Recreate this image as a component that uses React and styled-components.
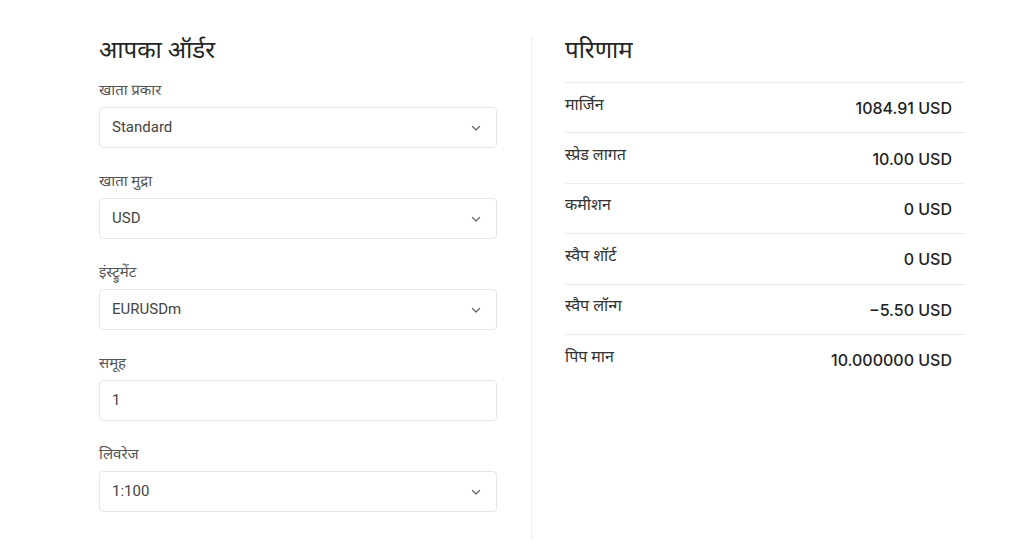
import React from "react";
import styled, { createGlobalStyle } from "styled-components";

const Global = createGlobalStyle`
  html, body { margin: 0; padding: 0; background: #ffffff; }
  body { font-family: Roboto, "Noto Sans Devanagari", "Noto Sans", "Lohit Devanagari", sans-serif; color: #222; }
  * { box-sizing: border-box; }
`;

const Page = styled.div`
  display: flex;
  align-items: stretch;
  padding: 36px 0 14px 99px;
  width: 1024px;
  height: 554px;
`;

const LeftCol = styled.section`
  width: 398px;
  display: flex;
  flex-direction: column;
`;

const Divider = styled.div`
  width: 1px;
  background: #efefef;
  margin: 1px 33px 0 34px;
`;

const RightCol = styled.section`
  width: 400px;
  display: flex;
  flex-direction: column;
`;

const Title = styled.h2`
  margin: 0;
  font-size: 24px;
  line-height: 28px;
  font-weight: 400;
  color: #252525;
`;

const Field = styled.div`
  display: flex;
  flex-direction: column;
  margin-top: ${(p) => (p.first ? "16px" : "23px")};
`;

const Label = styled.label`
  font-size: 15px;
  line-height: 20px;
  color: #555;
  margin-bottom: 7px;
`;

const Box = styled.div`
  height: 41px;
  border: 1px solid #e6e6e6;
  border-radius: 4px;
  display: flex;
  align-items: center;
  justify-content: space-between;
  padding: 0 12px 2px 12px;
  font-size: 15px;
  color: #444;
  background: #fff;
`;

const Chevron = styled.svg`
  width: 12px;
  height: 12px;
  margin-right: 2px;
  margin-top: 2px;
  color: #666;
`;

const Table = styled.div`
  margin-top: 18px;
  display: flex;
  flex-direction: column;
`;

const Row = styled.div`
  height: 50.4px;
  border-top: 1px solid #ececec;
  display: flex;
  align-items: center;
  justify-content: space-between;
  padding: 0 13px 0 0;
`;

const RowLabel = styled.span`
  font-size: 16px;
  color: #333;
  margin-top: -4px;
`;

const RowValue = styled.span`
  font-family: Inter, Roboto, sans-serif;
  font-size: 16px;
  font-weight: 500;
  color: #222;
  margin-top: 1px;
`;

const ChevronIcon = () => (
  <Chevron viewBox="0 0 12 12" fill="none">
    <path d="M2.5 4.5 L6 8 L9.5 4.5" stroke="currentColor" strokeWidth="1.3" strokeLinecap="round" strokeLinejoin="round" />
  </Chevron>
);

const fields = [
  { label: "खाता प्रकार", value: "Standard", select: true },
  { label: "खाता मुद्रा", value: "USD", select: true },
  { label: "इंस्ट्रुमेंट", value: "EURUSDm", select: true },
  { label: "समूह", value: "1", select: false },
  { label: "लिवरेज", value: "1:100", select: true },
];

const results = [
  { label: "मार्जिन", value: "1084.91 USD" },
  { label: "स्प्रेड लागत", value: "10.00 USD" },
  { label: "कमीशन", value: "0 USD" },
  { label: "स्वैप शॉर्ट", value: "0 USD" },
  { label: "स्वैप लॉन्ग", value: "−5.50 USD" },
  { label: "पिप मान", value: "10.000000 USD" },
];

export default function App() {
  return (
    <>
      <Global />
      <Page>
        <LeftCol>
          <Title>आपका ऑर्डर</Title>
          {fields.map((f, i) => (
            <Field key={f.label} first={i === 0}>
              <Label>{f.label}</Label>
              <Box>
                <span>{f.value}</span>
                {f.select && <ChevronIcon />}
              </Box>
            </Field>
          ))}
        </LeftCol>
        <Divider />
        <RightCol>
          <Title>परिणाम</Title>
          <Table>
            {results.map((r) => (
              <Row key={r.label}>
                <RowLabel>{r.label}</RowLabel>
                <RowValue>{r.value}</RowValue>
              </Row>
            ))}
          </Table>
        </RightCol>
      </Page>
    </>
  );
}
